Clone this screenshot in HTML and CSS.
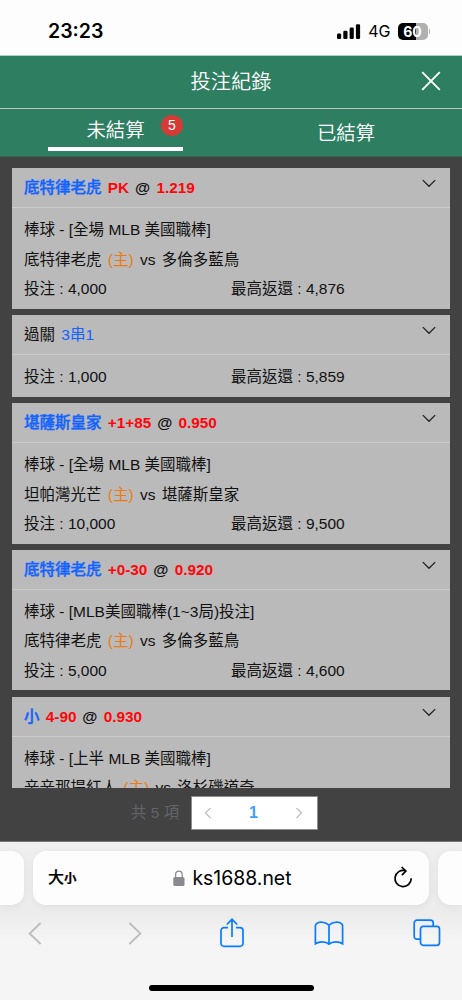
FILE: index.html
```html
<!DOCTYPE html>
<html lang="zh-Hant">
<head>
<meta charset="utf-8">
<title>投注紀錄</title>
<link rel="stylesheet" href="styles.css">
</head>
<body>
<div class="status">
  <span class="clock">23:23</span>
  <svg class="signal" width="24" height="16" viewBox="0 0 24 16"><rect x="0" y="9.5" width="4.2" height="5.5" rx="1.3"/><rect x="6.3" y="6.8" width="4.2" height="8.2" rx="1.3"/><rect x="12.6" y="3.6" width="4.2" height="11.4" rx="1.3"/><rect x="18.9" y="0.2" width="4.2" height="14.8" rx="1.3"/></svg>
  <span class="network">4G</span>
  <div class="battery"><span class="level">60</span><i class="cap"></i></div>
</div>
<header class="titlebar">
  <h1 class="title">投注紀錄</h1>
  <svg class="close" width="20" height="20" viewBox="0 0 20 20"><path d="M1.2 1.2 18.8 18.8M18.8 1.2 1.2 18.8"/></svg>
</header>
<nav class="tabs">
  <div class="tab"><div class="tab-active">未結算<span class="badge">5</span></div></div>
  <div class="tab tab-idle">已結算</div>
</nav>
<main class="page">
  <div class="list">
    <section class="card">
      <div class="head bold"><div><span class="team">底特律老虎</span> <span class="odds">PK</span> <span class="at">@</span> <span class="odds">1.219</span></div><svg class="chev" width="14" height="9" viewBox="0 0 14 9"><path d="M.8 1.1 7 7.3 13.2 1.1"/></svg></div>
      <div class="body">
        <div class="row">棒球 - [全場 MLB 美國職棒]</div>
        <div class="row">底特律老虎 <span class="home">(主)</span> <span class="vs">vs</span> 多倫多藍鳥</div>
        <div class="row split"><span>投注 : <span class="num">4,000</span></span><span>最高返還 : <span class="num">4,876</span></span></div>
      </div>
    </section>
    <section class="card">
      <div class="head"><div>過關 <span class="combo">3串1</span></div><svg class="chev" width="14" height="9" viewBox="0 0 14 9"><path d="M.8 1.1 7 7.3 13.2 1.1"/></svg></div>
      <div class="body">
        <div class="row split"><span>投注 : <span class="num">1,000</span></span><span>最高返還 : <span class="num">5,859</span></span></div>
      </div>
    </section>
    <section class="card">
      <div class="head bold"><div><span class="team">堪薩斯皇家</span> <span class="odds">+1+85</span> <span class="at">@</span> <span class="odds">0.950</span></div><svg class="chev" width="14" height="9" viewBox="0 0 14 9"><path d="M.8 1.1 7 7.3 13.2 1.1"/></svg></div>
      <div class="body">
        <div class="row">棒球 - [全場 MLB 美國職棒]</div>
        <div class="row">坦帕灣光芒 <span class="home">(主)</span> <span class="vs">vs</span> 堪薩斯皇家</div>
        <div class="row split"><span>投注 : <span class="num">10,000</span></span><span>最高返還 : <span class="num">9,500</span></span></div>
      </div>
    </section>
    <section class="card">
      <div class="head bold"><div><span class="team">底特律老虎</span> <span class="odds">+0-30</span> <span class="at">@</span> <span class="odds">0.920</span></div><svg class="chev" width="14" height="9" viewBox="0 0 14 9"><path d="M.8 1.1 7 7.3 13.2 1.1"/></svg></div>
      <div class="body">
        <div class="row">棒球 - [MLB美國職棒(1~3局)投注]</div>
        <div class="row">底特律老虎 <span class="home">(主)</span> <span class="vs">vs</span> 多倫多藍鳥</div>
        <div class="row split"><span>投注 : <span class="num">5,000</span></span><span>最高返還 : <span class="num">4,600</span></span></div>
      </div>
    </section>
    <section class="card">
      <div class="head bold"><div><span class="team">小</span> <span class="odds">4-90</span> <span class="at">@</span> <span class="odds">0.930</span></div><svg class="chev" width="14" height="9" viewBox="0 0 14 9"><path d="M.8 1.1 7 7.3 13.2 1.1"/></svg></div>
      <div class="body">
        <div class="row">棒球 - [上半 MLB 美國職棒]</div>
        <div class="row">辛辛那提紅人 <span class="home">(主)</span> <span class="vs">vs</span> 洛杉磯道奇</div>
      </div>
    </section>
  </div>
  <div class="pager">
    <span class="total">共 5 項</span>
    <div class="pages">
      <svg width="8" height="12" viewBox="0 0 8 12"><path d="M6.5 1 1.5 6 6.5 11"/></svg>
      <b>1</b>
      <svg width="8" height="12" viewBox="0 0 8 12"><path d="M1.5 1 6.5 6 1.5 11"/></svg>
    </div>
  </div>
</main>
<footer class="browser">
  <div class="addresses">
    <div class="peek peek-left"></div>
    <div class="address">
      <span class="size">大<small>小</small></span>
      <span class="host"><svg width="12" height="17" viewBox="0 0 12 17"><rect x=".3" y="7" width="11.2" height="9" rx="1.6" fill="#8a8a8f"/><path d="M2.6 7.5V4.4a3.3 3.3 0 0 1 6.6 0v3.1" fill="none" stroke="#8a8a8f" stroke-width="1.3"/></svg>ks1688.net</span>
      <svg class="reload" width="20" height="23" viewBox="0 0 20 23"><path d="M12.3 4.7A8.1 8.1 0 1 0 18.2 12.3M8.6 1 12.9 5 8.9 9.2"/></svg>
    </div>
    <div class="peek peek-right"></div>
  </div>
  <div class="tools">
    <svg class="muted" width="14" height="23" viewBox="0 0 14 23"><path d="M12.6 1 1.6 11.5 12.6 22"/></svg>
    <svg class="muted" width="14" height="23" viewBox="0 0 14 23"><path d="M1.4 1 12.4 11.5 1.4 22"/></svg>
    <svg width="24" height="30" viewBox="0 0 24 30"><path d="M8 9.6H4A3 3 0 0 0 1 12.6V25.4A3 3 0 0 0 4 28.4H20A3 3 0 0 0 23 25.4V12.6A3 3 0 0 0 20 9.6H16M12 19V1.5M6.8 6.5 12 1.3 17.2 6.5"/></svg>
    <svg width="30" height="25" viewBox="0 0 30 25"><path d="M15 4.3C11.8.7 5.2.3 2.3 2.8Q1.4 3.6 1.4 5V22.7C5 20.3 11.5 19.9 15 23.2 18.5 19.9 25 20.3 28.6 22.7V5Q28.6 3.6 27.7 2.8C24.8.3 18.2.7 15 4.3ZM15 4.3V23.2"/></svg>
    <svg width="28" height="28" viewBox="0 0 28 28"><path d="M7.5 20.2H4A2.8 2.8 0 0 1 1.2 17.4V4A2.8 2.8 0 0 1 4 1.2H17.4A2.8 2.8 0 0 1 20.2 4V7.2"/><rect x="7.5" y="7.3" width="19" height="19" rx="2.8"/></svg>
  </div>
  <div class="homebar"></div>
</footer>
</body>
</html>
```

FILE: styles.css
```css
* { box-sizing: border-box; }
body {
  margin: 0;
  width: 462px;
  height: 1000px;
  overflow: hidden;
  display: flex;
  flex-direction: column;
  background: #424242;
  color: #111;
  font: 15.5px/29.4px "Liberation Sans", "Noto Sans CJK TC", sans-serif;
}
svg { flex: none; display: block; }
.status {
  height: 56px;
  flex: none;
  padding: 8px 32px 0 48px;
  display: flex;
  align-items: center;
  background: #fdfdfd;
  border-bottom: 1px solid #b4cec4;
  color: #000;
  font-family: Inter, sans-serif;
}
.clock { font-size: 19.5px; font-weight: 600; margin-right: auto; }
.network { font-size: 16px; margin: 0 7px 0 7px; }
.battery { display: flex; align-items: center; gap: 1px; margin-bottom: 1px; }
.level {
  width: 30px;
  height: 17px;
  border-radius: 5px;
  background: linear-gradient(90deg, #000 60%, #b1b1b1 60%);
  color: #fff;
  font-size: 14px;
  font-weight: 700;
  line-height: 17px;
  text-align: center;
}
.cap { width: 1.5px; height: 5px; border-radius: 0 2px 2px 0; background: #b1b1b1; }
.titlebar {
  height: 53px;
  flex: none;
  display: grid;
  grid-template-columns: 1fr auto 1fr;
  align-items: center;
  padding: 0 21px;
  background: #2e7f62;
  border-bottom: 1px solid #c0c9c5;
  color: #fff;
}
.title {
  grid-column: 2;
  margin: 2px 0 0;
  font-size: 20.2px;
  font-weight: 350;
}
.close { justify-self: end; margin-bottom: 3px; }
.close path { stroke: #fff; stroke-width: 1.9; fill: none; }
.tabs {
  height: 48px;
  flex: none;
  display: flex;
  background: #2e7f62;
  border-bottom: 1px solid #386350;
  color: #fff;
  font-size: 19.4px;
  font-weight: 350;
}
.tab { width: 231px; display: flex; justify-content: center; }
.tab-idle { align-items: center; padding: 2px 1px 0 0; }
.tab-active {
  position: relative;
  width: 135px;
  height: 42px;
  line-height: 42.5px;
  text-align: center;
  border-bottom: 4px solid #fff;
}
.badge {
  position: absolute;
  left: 113px;
  top: 6px;
  width: 22px;
  height: 21px;
  border-radius: 50%;
  background: #d63a34;
  font-size: 14px;
  line-height: 21px;
}
.page { height: 684px; flex: none; padding: 11px 12px 0; }
.list {
  height: 620px;
  overflow: hidden;
  display: flex;
  flex-direction: column;
  gap: 6.1px;
}
.card { flex: none; background: #bababa; }
.head {
  height: 40.2px;
  padding: 0 14px 0 12px;
  display: flex;
  justify-content: space-between;
  line-height: 39px;
  border-bottom: 1.4px solid #cbcbcb;
}
.bold { font-weight: 700; }
.chev { margin-top: 11px; }
.chev path { fill: none; stroke: #222; stroke-width: 1.3; }
.team { color: #1263ff; font-weight: 500; margin-right: 2px; -webkit-text-stroke: 0.4px #1263ff; }
.combo { color: #1263ff; margin-left: 2px; }
.odds { color: #ff050b; font-size: 15.3px; }
.at { margin: 0 2px 0 1.6px; }
.home { color: #ea7a13; margin-left: 2px; }
.vs { margin: 0 2px; }
.body { padding: 7.2px 12px 5.2px; }
.row { height: 29.4px; white-space: nowrap; }
.split { display: grid; grid-template-columns: 1fr 1fr; }
.pager { display: flex; align-items: center; margin-top: 8px; padding-left: 119px; }
.total { width: 60px; color: #626469; font-size: 15.5px; }
.pages {
  width: 127px;
  height: 34px;
  padding: 0 14px 0 12px;
  display: flex;
  align-items: center;
  justify-content: space-between;
  background: #fff;
  border: 1px solid #8c8c8c;
}
.pages svg path { fill: none; stroke: #c0c4cc; stroke-width: 1.5; }
.pages b { color: #409eff; font-size: 16px; }
.browser {
  flex: 1;
  background: linear-gradient(#efefef, #ececec 72px, #f5f5f5 100px);
  border-top: 1px solid #77777a;
  font-family: Inter, "Noto Sans CJK TC", sans-serif;
  color: #000;
}
.addresses { display: flex; justify-content: space-between; padding-top: 9px; }
.peek, .address { height: 54px; background: #fdfdfd; box-shadow: 0 2px 8px #0000000f; }
.peek-left { width: 24px; border-radius: 0 13px 13px 0; }
.peek-right { width: 24px; border-radius: 13px 0 0 13px; }
.address {
  width: 396px;
  border-radius: 13px;
  padding: 0 16px 0 15px;
  display: grid;
  grid-template-columns: 1fr auto 1fr;
  align-items: center;
}
.size { font-size: 16px; font-weight: 500; display: flex; align-items: baseline; -webkit-text-stroke: 0.2px #000; }
.size small { font-size: 12.5px; font-weight: 700; }
.host { display: flex; align-items: center; gap: 7px; font-size: 19.4px; padding: 1px 0 0 4px; }
.reload { justify-self: end; margin-bottom: 1px; }
.reload path { fill: none; stroke: #000; stroke-width: 1.7; }
.tools {
  height: 58px;
  padding: 0 0 2px;
  margin-left: -14px;
  margin-right: -13.5px;
  display: grid;
  grid-template-columns: repeat(5, 1fr);
  align-items: center;
  justify-items: center;
}
.tools svg:nth-child(2) { margin-left: 5px; }
.tools svg:nth-child(3) { margin-left: 2px; }
.tools path, .tools rect { fill: none; stroke: #087bff; stroke-width: 1.7; }
.tools .muted path { stroke: #bcbcbe; stroke-width: 1.8; }
.homebar { width: 165px; height: 6px; margin: 22px auto 0; border-radius: 3px; background: #000; }
```
